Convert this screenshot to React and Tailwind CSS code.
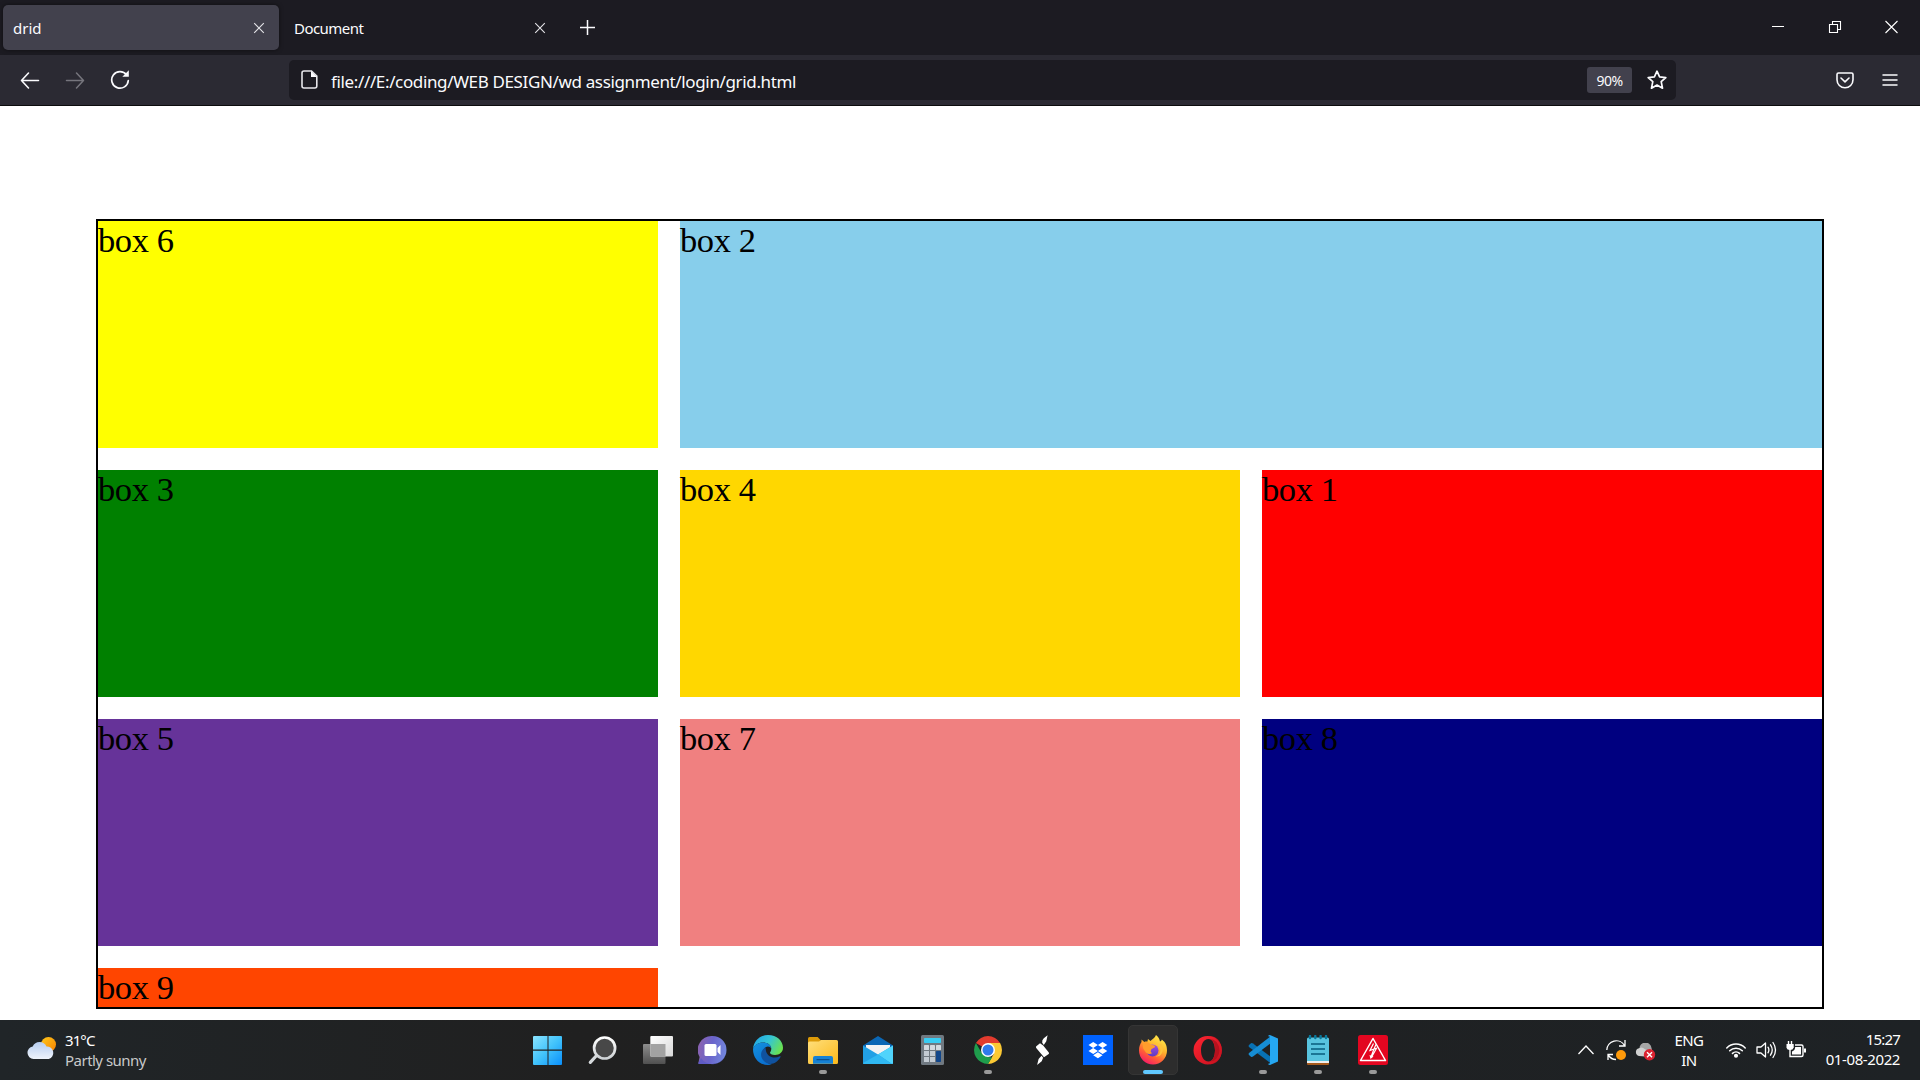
const CloseGlyph = () => (
  <svg width="12" height="12" viewBox="0 0 12 12" stroke="#e4e4e8" strokeWidth="1.1" fill="none">
    <path d="M1.2 1.2l9.6 9.6M10.8 1.2l-9.6 9.6" />
  </svg>
);

function Tabs() {
  return (
    <div className="flex h-[55px] bg-[#1c1b22] text-[15px] text-[#fbfbfe]">
      <div className="ml-[3px] mt-[5px] flex h-[45px] w-[276px] items-center justify-between rounded-[5px] bg-[#42414d] pl-[10px] pr-[14px] shadow-[0_0_4px_rgba(0,0,0,0.5)]">
        <span className="pt-[2px]">drid</span>
        <CloseGlyph />
      </div>
      <div className="mt-[5px] flex h-[45px] w-[281px] items-center justify-between pl-[15px] pr-[14px]">
        <span className="pt-[2px] tracking-[-0.55px]">Document</span>
        <CloseGlyph />
      </div>
      <svg className="ml-[19px] mt-[19px]" width="17" height="17" viewBox="0 0 17 17" stroke="#fbfbfe" strokeWidth="1.5">
        <path d="M8.5 1v15M1 8.5h15" />
      </svg>
      <div className="ml-auto flex pr-[21px] pt-[20px]">
        <svg className="mr-[43px]" width="13" height="14" viewBox="0 0 13 14" stroke="#fff"><path d="M0 6.5h12" /></svg>
        <svg className="mr-[42px]" width="14" height="14" viewBox="0 0 14 14" stroke="#fff" strokeWidth="1.1" fill="none">
          <path d="M1.5 4.5h8v8h-8zM4.5 4V1.500h8v8H10" />
        </svg>
        <svg width="15" height="14" viewBox="0 0 15 14" stroke="#fff" strokeWidth="1.1"><path d="M1.500 1l12 12M13.500 1l-12 12" /></svg>
      </div>
    </div>
  );
}

function Toolbar() {
  return (
    <div className="flex h-[51px] items-center border-b border-[#0c0c0d] bg-[#2b2a33] text-[#fbfbfe]">
      <svg className="ml-[20px]" width="20" height="20" viewBox="0 0 20 20" fill="none" stroke="#fbfbfe" strokeWidth="1.6" strokeLinecap="round" strokeLinejoin="round">
        <path d="M18.500 10.500H1.500M8.500 3l-7 7.500 7 7.500" />
      </svg>
      <svg className="ml-[25px]" width="20" height="20" viewBox="0 0 20 20" fill="none" stroke="#76757d" strokeWidth="1.500" strokeLinecap="round" strokeLinejoin="round">
        <path d="M1.500 10.500h17M11.500 3l7 7.500-7 7.500" />
      </svg>
      <svg className="ml-[25px]" width="20" height="22" viewBox="0 0 20 22" fill="none" stroke="#fbfbfe" strokeWidth="1.700" strokeLinecap="round">
        <path d="M16.600 5.800A8.300 8.300 0 1 0 18.300 11.500" />
        <path d="M18.800 1.300v6.500h-6.500z" fill="#fbfbfe" stroke="none" />
      </svg>
      <div className="ml-[159px] flex h-[40px] w-[1387px] items-center rounded-[5px] bg-[#1c1b22]">
        <svg className="-mt-[2px] ml-[12px]" width="17" height="19" viewBox="0 0 17 19" fill="none" stroke="#e6e6ea" strokeWidth="1.600">
          <path d="M3 1h7.500L15.800 6v10a2 2 0 0 1-2 2H3a2 2 0 0 1-2-2V3a2 2 0 0 1 2-2z" />
          <path d="M10 1v6h6z" fill="#fbfbfe" stroke="none" />
        </svg>
        <span className="ml-[13px] pt-[3px] text-[17px] tracking-[-0.36px]">file:///E:/coding/WEB DESIGN/wd assignment/login/grid.html</span>
        <span className="ml-auto flex h-[26px] w-[45px] items-center justify-center rounded-[3px] bg-[#42414d] pt-[1px] text-[14px] tracking-[-0.500px]">90%</span>
        <svg className="ml-[15px] mr-[9px]" width="20" height="20" viewBox="0 0 20 20" fill="none" stroke="#fbfbfe" strokeWidth="1.700" strokeLinejoin="round">
          <path d="M10 1.200l2.600 5.700 6.200.7-4.600 4.100 1.300 6.500-5.500-3.200-5.500 3.200 1.300-6.500L1.200 7.600l6.200-.7z" />
        </svg>
      </div>
      <svg className="ml-[160px]" width="18" height="17" viewBox="0 0 18 17" fill="none" stroke="#fbfbfe" strokeWidth="1.600" strokeLinecap="round" strokeLinejoin="round">
        <path d="M2.500 1h13A1.500 1.500 0 0 1 17 2.500v5.300a8 8 0 0 1-16 0V2.500A1.500 1.500 0 0 1 2.500 1zM5 6l4 3.800L13 6" />
      </svg>
      <svg className="ml-[28px]" width="16" height="14" viewBox="0 0 16 14" stroke="#fbfbfe" strokeWidth="1.500" strokeLinecap="round">
        <path d="M1 2h14M1 7h14M1 12h14" />
      </svg>
    </div>
  );
}

const boxes = [
  ["box 6", "bg-[#ffff00]"],
  ["box 2", "bg-[#87ceeb] col-span-2"],
  ["box 3", "bg-[#008000]"],
  ["box 4", "bg-[#ffd700]"],
  ["box 1", "bg-[#ff0000]"],
  ["box 5", "bg-[#663399]"],
  ["box 7", "bg-[#f08080]"],
  ["box 8", "bg-[#000080]"],
  ["box 9", "bg-[#ff4500]"],
];

const Icon = ({ children }) => (
  <svg width="30" height="30" viewBox="0 0 30 30">{children}</svg>
);

const Start = () => (
  <Icon>
    <defs><linearGradient id="win" x1="0" y1="0" x2="1" y2="1"><stop stopColor="#8be4ff" /><stop offset=".5" stopColor="#42c3fb" /><stop offset="1" stopColor="#0a8ffb" /></linearGradient></defs>
    <path fill="url(#win)" d="M1 1h13.500v13.500H0V2a1 1 0 0 1 1-1zM15.500 1H28a1 1 0 0 1 1 1v12.500H15.500zM0 15.700h14.500V30H1a1 1 0 0 1-1-1zM15.500 15.700H29V29a1 1 0 0 1-1 1H15.500z" />
  </Icon>
);
const Search = () => (
  <Icon>
    <defs><linearGradient id="lens" x1="0" y1="0" x2="0" y2="1"><stop stopColor="#fff" /><stop offset="1" stopColor="#ced2d5" /></linearGradient></defs>
    <path d="M9.500 19.500L2.300 27.300" stroke="#d5d9dc" strokeWidth="3.200" strokeLinecap="round" />
    <circle cx="16.600" cy="13" r="10.500" fill="#484848" stroke="url(#lens)" strokeWidth="2.700" />
  </Icon>
);
const TaskView = () => (
  <Icon>
    <defs>
      <linearGradient id="tv1" x1="0" y1="0" x2="1" y2="1"><stop stopColor="#fff" /><stop offset="1" stopColor="#d8d8d8" /></linearGradient>
      <linearGradient id="tv2" x1="0" y1="0" x2="0" y2="1"><stop stopColor="#8d8d8d" /><stop offset="1" stopColor="#505050" /></linearGradient>
    </defs>
    <rect x="0" y="9" width="22.500" height="20" rx="1" fill="url(#tv2)" />
    <rect x="7.300" y="1" width="22.700" height="20.500" rx="1" fill="url(#tv1)" />
    <rect x="7.300" y="9" width="15.200" height="12.500" fill="#a2a2a2" />
  </Icon>
);
const Chat = () => (
  <Icon>
    <defs><linearGradient id="chat" x1="0" y1=".2" x2="1" y2=".4"><stop stopColor="#8d62ad" /><stop offset=".5" stopColor="#6a64cb" /><stop offset="1" stopColor="#7286dd" /></linearGradient></defs>
    <path d="M14.500 1a14 14 0 1 1 0 28H1.500Q0 29 .5 27.500L1.600 22A14 14 0 0 1 14.500 1z" fill="url(#chat)" />
    <path d="M3 23a14 14 0 0 0 25-4A14 14 0 0 1 14.500 29H1.500Q0 29 .5 27.500z" fill="#5459c7" opacity=".7" />
    <rect x="6.500" y="9" width="12" height="12" rx="1.500" fill="#fff" />
    <path d="M19.500 13l3-3v10l-3-3z" fill="#fff" />
  </Icon>
);
const Edge = () => (
  <Icon>
    <defs>
      <linearGradient id="ed1" x1="0" y1=".2" x2="1" y2=".6"><stop stopColor="#20a6e8" /><stop offset=".5" stopColor="#35c5d3" /><stop offset="1" stopColor="#6be34d" /></linearGradient>
      <linearGradient id="ed2" x1="0" y1="0" x2=".6" y2="1"><stop stopColor="#1492df" /><stop offset="1" stopColor="#0a6fd0" /></linearGradient>
    </defs>
    <path d="M0 14C.7 6 7 0 15 0c9 0 15 6 15 12.800 0 4.700-3.700 7.200-8 7.200-3.200 0-5-1.200-5-2.200 0-.8 1.300-1.500 1.300-4C18.300 9.500 14 7.500 10 7.500 5.500 7.500 1.500 10 0 14z" fill="url(#ed1)" />
    <path d="M0 14C1.200 9.800 5.500 7.500 10 7.500c5 0 8.300 3 8.300 6.300-.5-1.500-1.800-2.300-3.300-2.300C10.500 12 9 16.500 10.200 21c1.200 5 5.300 8.300 8.800 8.500-1.500.3-2.500.5-4 .5C6.500 30 0 23.500 0 14z" fill="url(#ed2)" />
    <path d="M12.500 12.500C7 15 7 22 10.500 25.500c4.500 5.500 12.500 4.500 17-3.500.5-.9-.3-1-.8-.7-5 2.700-11.500.7-13.200-3.800-.7-1.800-.8-3.700-1-5z" fill="#10529f" />
  </Icon>
);
const Folder = () => (
  <Icon>
    <defs><linearGradient id="fold" x1="0" y1="0" x2="1" y2="1"><stop stopColor="#ffdf7c" /><stop offset="1" stopColor="#fbb91b" /></linearGradient></defs>
    <path d="M0 3.500Q0 2 1.500 2h8.200l3.300 3.500V10H0z" fill="#dc9a08" />
    <path d="M0 8Q0 6.500 1.500 6.500H11L13 5h15.500Q30 5 30 6.500v21Q30 29 28.500 29H1.500Q0 29 0 27.500z" fill="url(#fold)" />
    <path d="M5 28.700V23q0-2 2-2h16q2 0 2 2v5.700z" fill="#1581d4" />
    <path d="M9 24.700h12" stroke="#0b508e" strokeWidth="1.200" strokeLinecap="round" />
  </Icon>
);
const Mail = () => (
  <Icon>
    <path d="M0 10.500L15 1l15 9.500V15H0z" fill="#0b67b5" />
    <path d="M3 10h24v7L15 22 3 17z" fill="#f3f3f3" />
    <path d="M0 10.500l15 9 15-9V28q0 1-1 1H1q-1 0-1-1z" fill="#22a0e5" />
    <path d="M30 10.500V28q0 1-1 1L15 19.500z" fill="#50d4fb" />
    <path d="M0 28L15 19.500 29 29H1q-1 0-1-1z" fill="#30b8f2" />
  </Icon>
);
const Calculator = () => (
  <Icon>
    <rect x="3" width="23" height="30" rx="1.500" fill="#707981" />
    <rect x="6" y="3" width="17" height="5" rx=".7" fill="#39cdf3" />
    {[6, 12, 18].map((x) => <rect key={x} x={x} y="10" width="5" height="5" rx=".6" fill="#d3d9df" />)}
    {[6, 12].map((x) => <path key={x} d={`M${x} 16h5v5h-5zM${x} 22h5v5h-5z`} fill="#c3cbd3" />)}
    <rect x="18" y="16" width="5" height="11" rx=".7" fill="#11468a" />
  </Icon>
);
const Chrome = () => (
  <Icon>
    <path d="M15 15L2.900 8a14 14 0 0 1 24.200 0z" fill="#e33b2e" />
    <path d="M15 8h12.100A14 14 0 0 1 15 29l6-10.500z" fill="#fcc934" />
    <path d="M2.900 8L9 18.500l6 3.500 4 .5L15 29A14 14 0 0 1 2.900 8z" fill="#1f9d4c" />
    <circle cx="15" cy="15" r="7" fill="#fff" />
    <circle cx="15" cy="15" r="5.500" fill="#317bed" />
  </Icon>
);
const Bolt = () => (
  <Icon>
    <path d="M19.600.2L18.300 6.300 15.800 10l-1.600-2.200q-.4-3 1.600-4.600zM12 8.200l3.200 2.300 5.600 7q.6.900-.1 1.600L16 22.200 8.200 13q-.6-1 .1-1.700zM13.500 20.800l1.600 2-1.400 3.400L9.100 30l1.500-6z" fill="#fff" />
  </Icon>
);
const Dropbox = () => (
  <Icon>
    <path fill="#0062ff" d="M0 0h30v30H0z" />
    <path fill="#fff" d="M10.200 7l4.700 3-4.700 3-4.700-3zM19.600 7l4.700 3-4.700 3-4.700-3zM10.200 13l4.700 3-4.700 3-4.700-3zM19.600 13l4.700 3-4.700 3-4.700-3zM14.900 17.200l4.700 3-4.700 3-4.700-3z" />
  </Icon>
);
const Firefox = () => (
  <Icon>
    <defs>
      <linearGradient id="ff1" x1=".8" y1="0" x2=".25" y2="1"><stop stopColor="#fff14f" /><stop offset=".4" stopColor="#ffb52c" /><stop offset=".7" stopColor="#ff5d37" /><stop offset="1" stopColor="#f5156c" /></linearGradient>
      <linearGradient id="ff2" x1="0" y1="0" x2="0" y2="1"><stop stopColor="#a34de0" /><stop offset="1" stopColor="#5a3ac4" /></linearGradient>
    </defs>
    <path d="M18 0c2.500 2 3.500 4 4 6.500 1.500-.5 1.800-1.500 1.800-2 4 3 5.200 6.500 5.200 11A14 14 0 0 1 1 15.500c0-4 1-6 2.500-8.500V4.500L6.300 7c1-.4 2-.5 3-.3L10 4l2.500 2C14 4.500 17 3 18 0z" fill="url(#ff1)" />
    <circle cx="14.500" cy="15.500" r="6" fill="url(#ff2)" />
    <path d="M5 8q5-3 8 2c3 0 4 .5 4 1.500 0 1.500-3 1.500-4 3.500q-1 2.500 1.500 3c-3.500 2-6.500.5-7.500-2Q4 13 5 8z" fill="#ff9d2c" />
    <path d="M18 9q4 2 4.500 6-.3 5-5 6.500Q22 22 24 18t-1-9z" fill="#ffc33b" />
  </Icon>
);
const Opera = () => (
  <Icon>
    <defs><linearGradient id="op" x1="0" y1="0" x2="1" y2="1"><stop stopColor="#ff2531" /><stop offset="1" stopColor="#c5101e" /></linearGradient></defs>
    <path d="M11 3.800C19 .5 22 8 22 15.200S19 30 11 26.600c4 3.500 10 3.500 14-.8 5-5.500 5-15.500 0-21.200-4-4.500-10-4.300-14-.8z" fill="#b3131f" />
    <path fillRule="evenodd" d="M14.700 1a14.200 14.200 0 1 1 0 28.400 14.200 14.200 0 0 1 0-28.400zM15.500 4C10.500 4 8 9.500 8 15.200s2.500 11.200 7.500 11.200c4.300 0 6.500-5.500 6.500-11.200S19.800 4 15.500 4z" fill="url(#op)" />
    <path d="M16 4q6 .5 6 11.200T16 26.400q4 .6 7.500-3 3-4 3-8.200t-3-8.200q-3.500-3.600-7.500-3z" fill="#a60f1c" opacity=".7" />
  </Icon>
);
const Code = () => (
  <Icon>
    <path d="M1 10l2-1.800q1-.5 2 .2L23 22v6.500L1 12q-1-1 0-2z" fill="#0871b4" />
    <path d="M1 20l2 1.800q1 .5 2-.2L23 8V1L1 18q-1 1 0 2z" fill="#168dd4" />
    <path d="M22 0l8 3.500v23L22 30q-1.500 0-2-1.200 2 .2 2-1.300v-25Q22 1 20 1.200 20.500 0 22 0z" fill="#25a7f2" />
  </Icon>
);
const Notepad = () => (
  <Icon>
    <path d="M4 26h22v3q0 1-1 1H5q-1 0-1-1z" fill="#a65a1c" />
    <path d="M4 25h22v3H4z" fill="#eee" />
    <path d="M4 4q0-1.500 1.500-1.500h19Q26 2.500 26 4v22H4z" fill="#58c4df" />
    <path d="M8 9h14M8 14h14M8 19h14" stroke="#075c7d" strokeWidth="1.600" />
    <path d="M7 1v2M12.300 1v2M17.600 1v2M23 1v2" stroke="#087a9e" strokeWidth="2.400" strokeLinecap="round" />
  </Icon>
);
const Volt = () => (
  <Icon>
    <rect width="30" height="30" rx="2.500" fill="#e30620" />
    <path d="M15 3.500L27.500 25.500h-25z" fill="none" stroke="#fff" strokeWidth="1.500" strokeLinejoin="round" />
    <path d="M15.500 8.500L12 15.500l4-1.500-3 8M18 9.500l-2 4.500 2.500-.8-5 9" stroke="#fff" strokeWidth="1.200" fill="none" />
    <path d="M11.500 20l1 4 3-2.500z" fill="#fff" />
  </Icon>
);

const apps = [
  [Start], [Search], [TaskView], [Chat], [Edge], [Folder, "run"], [Mail], [Calculator],
  [Chrome, "run"], [Bolt], [Dropbox], [Firefox, "active"], [Opera], [Code, "run"], [Notepad, "run"], [Volt, "run"],
];

function Taskbar() {
  return (
    <div className="flex h-[60px] bg-linear-to-r from-[#202528] via-[#202020] via-30% to-[#1e2225] text-[15px] text-white">
      <div className="flex w-[523px] items-start">
        <svg className="ml-[27px] mt-[16px]" width="30" height="24" viewBox="0 0 30 24">
          <defs>
            <linearGradient id="sun" x1="0" y1="0" x2="1" y2="1"><stop stopColor="#ffc91b" /><stop offset="1" stopColor="#f57f00" /></linearGradient>
            <linearGradient id="cloud" x1="0" y1="0" x2="0" y2="1"><stop stopColor="#b6cdf0" /><stop offset="1" stopColor="#eef3fb" /></linearGradient>
          </defs>
          <circle cx="21.500" cy="8.500" r="7.500" fill="url(#sun)" />
          <path d="M6.500 23a6.300 6.300 0 0 1-.8-12.500A7.500 7.500 0 0 1 19.500 10.500 6.400 6.400 0 0 1 21.800 23z" fill="url(#cloud)" />
        </svg>
        <div className="ml-[8px] pt-[10px] leading-[20px]">
          <div className="tracking-[-0.900px]">31°C</div>
          <div className="tracking-[-0.520px] text-[#c8c9ca]">Partly sunny</div>
        </div>
      </div>
      <div className="flex gap-[5px] pt-[5px]">
        {apps.map(([Glyph, state], i) => (
          <div key={i} className={"flex h-[50px] w-[50px] flex-col items-center rounded-[5px] " + (state === "active" ? "bg-[#2d2d2d] pt-[9px] border border-[#353535]" : "pt-[10px]")}>
            <Glyph />
            {state === "run" && <i className="mt-[5px] h-[4px] w-[8px] rounded-full bg-[#9a9a9a]" />}
            {state === "active" && <i className="mt-[5px] h-[4px] w-[20px] shrink-0 rounded-full bg-[#60c8ff]" />}
          </div>
        ))}
      </div>
      <div className="ml-auto flex pr-[20px]">
        <svg className="mr-[11px] mt-[24px]" width="18" height="12" viewBox="0 0 18 12" fill="none" stroke="#fff" strokeWidth="1.300"><path d="M1.500 10L9 2l7.500 8" /></svg>
        <svg className="mr-[8px] mt-[19px]" width="21" height="22" viewBox="0 0 21 22" fill="none" stroke="#fff" strokeWidth="1.300">
          <path d="M.8 11A9.500 9.500 0 0 1 18.500 6.500M19 1v6h-6M7 15.500H2v5.500M2.500 16.500A9.500 9.500 0 0 0 10 20.500" />
          <circle cx="15" cy="16" r="5" fill="#ff9a0a" stroke="none" />
        </svg>
        <svg className="mr-[1px] mt-[23px]" width="21" height="18" viewBox="0 0 21 18">
          <path d="M4.500 6A6 6 0 0 1 16.500 5l2 7H8z" fill="#a5a5a5" />
          <path d="M4 13a4 4 0 0 1 0-7.800q3-2 6 1L16 9v5z" fill="#d0d0d0" />
          <circle cx="14.500" cy="11.700" r="5.700" fill="#db2230" />
          <path d="M12 9.200l5 5M17 9.200l-5 5" stroke="#fff" strokeWidth="1.400" />
        </svg>
        <div className="w-[64px] pt-[10px] text-center leading-[20px] tracking-[-0.600px]"><div>ENG</div><div>IN</div></div>
        <svg className="ml-[5px] mt-[21px]" width="20" height="17" viewBox="0 0 20 17" fill="none" stroke="#fff" strokeWidth="1.500" strokeLinecap="round">
          <path d="M.8 7a12.800 12.800 0 0 1 18.400 0M3.700 9.700a9 9 0 0 1 12.600 0M6.500 12.400a5 5 0 0 1 7 0" /><circle cx="10" cy="14.700" r="1.300" fill="#fff" />
        </svg>
        <svg className="ml-[10px] mt-[21px]" width="21" height="18" viewBox="0 0 21 18" fill="none" stroke="#fff" strokeWidth="1.300" strokeLinejoin="round" strokeLinecap="round">
          <path d="M1 6h4l4.500-4v14L5 12H1zM12 6.200q1.800 2.800 0 5.600M14.500 3.800q3.500 5.200 0 10.400M17 1.500q5 7.500 0 15" />
        </svg>
        <svg className="ml-[9px] mt-[20px]" width="21" height="18" viewBox="0 0 21 18" fill="none" stroke="#fff" strokeWidth="1.400">
          <path d="M2.500 1v4M5.500 1v4M4 9v7.500h11.500a1.500 1.500 0 0 0 1.500-1.500V6.500A1.500 1.500 0 0 0 15.500 5H9" />
          <path d="M.5 4h7.200v3.500Q7 10 4 10T.5 7.500z" fill="#fff" stroke="none" />
          <path d="M6 14.500V11.500q3-1 3.200-4.500h5.800v7.500zM18 8.500h2v4h-2z" fill="#fff" stroke="none" />
        </svg>
        <div className="w-[93px] pt-[9px] text-right leading-[20px] tracking-[-0.400px]"><div className="tracking-[-0.800px]">15:27</div><div>01-08-2022</div></div>
      </div>
    </div>
  );
}

export default function App() {
  return (
    <div className="flex h-[1080px] w-[1920px] flex-col overflow-hidden bg-white font-['Noto_Sans','Open_Sans',sans-serif]">
      <Tabs />
      <Toolbar />
      <main className="flex-1 px-[96px] pt-[113px] font-['Liberation_Serif',serif]">
        <div className="grid h-[790px] grid-cols-3 grid-rows-[227px_227px_227px_39px] gap-[22px] border-2 border-black text-[34.500px] leading-[39px] tracking-[-0.400px] text-black">
          {boxes.map(([label, tone]) => <div key={label} className={tone}>{label}</div>)}
        </div>
      </main>
      <Taskbar />
    </div>
  );
}
